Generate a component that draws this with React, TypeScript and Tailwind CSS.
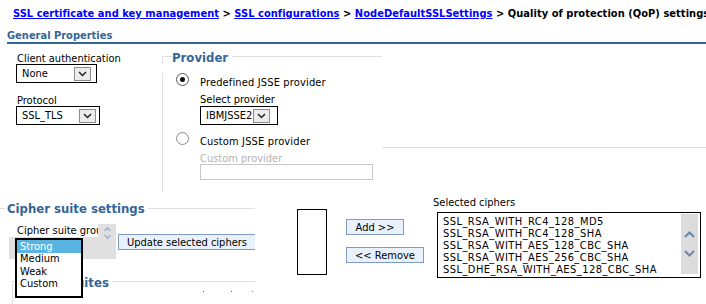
import React from "react";

function Chev() {
  return (
    <svg width="9" height="6" viewBox="0 0 9 6">
      <path d="M1 1L4.5 4.5L8 1" fill="none" stroke="#222" strokeWidth="1.5" />
    </svg>
  );
}

function Sel({ className, text, btn }: { className: string; text: string; btn: string }) {
  return (
    <div className={`flex items-center border border-black h-[19px] pl-[5px] bg-white ${className}`}>
      <span className="leading-[13px] whitespace-nowrap">{text}</span>
      <span className={`flex h-[14px] w-[17px] items-center justify-center border border-[#8c8c8c] bg-[#ececec] ${btn}`}>
        <Chev />
      </span>
    </div>
  );
}

function Radio({ checked }: { checked?: boolean }) {
  return (
    <span
      className={`flex h-[13px] w-[13px] shrink-0 items-center justify-center rounded-full border bg-white ${
        checked ? "border-[#555]" : "border-[#8a8a8a]"
      }`}
    >
      {checked && <span className="h-[5px] w-[5px] rounded-full bg-[#111]" />}
    </span>
  );
}

export default function App() {
  const ciphers = [
    "SSL_RSA_WITH_RC4_128_MD5",
    "SSL_RSA_WITH_RC4_128_SHA",
    "SSL_RSA_WITH_AES_128_CBC_SHA",
    "SSL_RSA_WITH_AES_256_CBC_SHA",
    "SSL_DHE_RSA_WITH_AES_128_CBC_SHA",
  ];
  return (
    <div className="relative h-[304px] w-[706px] overflow-hidden bg-white text-[11px] text-black font-['DejaVu_Sans_Condensed','DejaVu_Sans',sans-serif]">
      {/* Breadcrumb */}
      <div className="h-[20px] whitespace-nowrap pl-[13px] pt-[7px] font-bold leading-[13px] tracking-[0.04px]">
        <a className="text-[#0000ff] underline">SSL certificate and key management</a>
        <span> &gt; </span>
        <a className="text-[#0000ff] underline">SSL configurations</a>
        <span> &gt; </span>
        <a className="text-[#0000ff] underline">NodeDefaultSSLSettings</a>
        <span> &gt; Quality of protection (QoP) settings</span>
      </div>

      {/* General Properties */}
      <div className="ml-[7px] mt-[10px] border-b-2 border-[#336699] font-bold leading-[12px] text-[#336699]">
        General Properties
      </div>

      {/* Row 1 */}
      <div className="flex h-[152px]">
        <div className="w-[162px] shrink-0 pl-[16px] pt-[9px]">
          <div className="pl-[1px] leading-[11px]">Client authentication</div>
          <Sel className="w-[81px]" text="None" btn="ml-[26px]" />
          <div className="mt-[12px] pl-[1px] leading-[11px]">Protocol</div>
          <Sel className="w-[84px]" text="SSL_TLS" btn="ml-[16px]" />
        </div>

        {/* Provider fieldset */}
        <div className="w-[220px] shrink-0 pt-[7px]">
          <div className="flex h-[13px]">
            <div className="mt-[5px] h-[8px] w-[10px] border-l border-t border-[#e0e0e0]" />
            <div className="text-[13px] font-bold leading-[13px] text-[#336699]">Provider</div>
            <div className="ml-[4px] mt-[5px] flex-1 border-t border-[#e0e0e0]" />
          </div>
          <div className="h-[119px] border-l border-[#e0e0e0] pl-[13px]">
            <div className="mt-[9px] flex h-[16px]">
              <Radio checked />
              <span className="ml-[11px] mt-[3px] whitespace-nowrap leading-[13px] tracking-[0.15px]">Predefined JSSE provider</span>
            </div>
            <div className="pl-[24px]">
              <div className="mt-[4px] leading-[13px]">Select provider</div>
              <Sel className="w-[78px]" text="IBMJSSE2" btn="ml-[1px]" />
            </div>
            <div className="mt-[7px] flex h-[16px]">
              <Radio />
              <span className="ml-[11px] mt-[3px] whitespace-nowrap leading-[13px] tracking-[0.15px]">Custom JSSE provider</span>
            </div>
            <div className="pl-[24px]">
              <div className="mt-[5px] leading-[11px] text-[#b4b4b4]">Custom provider</div>
              <div className="h-[16px] w-[173px] border border-[#c8c8c8] bg-white" />
            </div>
          </div>
        </div>

        <div className="flex-1">
          <div className="mt-[103px] border-t border-[#e0e0e0]" />
        </div>
      </div>

      {/* Row 2: cipher suites */}
      <div className="flex h-[108px]">
        <div className="w-[255px] shrink-0 overflow-hidden">
          <div className="mt-[6px] flex h-[13px]">
            <div className="mt-[6px] w-[5px] border-t border-[#e0e0e0]" />
            <div className="ml-[2px] whitespace-nowrap text-[13px] font-bold leading-[13px] text-[#336699]">
              Cipher suite settings
            </div>
            <div className="ml-[3px] mt-[6px] flex-1 border-t border-[#e0e0e0]" />
          </div>
          <div className="flex">
            <div className="ml-[9px] mt-[9px] h-[35px] w-[107px] shrink-0 bg-[#e0e0e0]">
              <div className="flex">
                <div className="h-[13px] w-[89px] overflow-hidden whitespace-nowrap bg-white pl-[8px] leading-[13px]">
                  Cipher suite groups
                </div>
                <svg className="ml-[5px] mt-[2px]" width="9" height="14" viewBox="0 0 9 14">
                  <path d="M1.5 5L4.5 2L7.5 5" fill="none" stroke="#9fb2cc" strokeWidth="1.6" />
                  <path d="M1.5 9L4.5 12L7.5 9" fill="none" stroke="#9fb2cc" strokeWidth="1.6" />
                </svg>
              </div>
            </div>
            <div className="ml-[2px] mt-[19px] flex h-[16px] shrink-0 items-center whitespace-nowrap border border-[#7f9bc3] bg-[#e9f1fc] pl-[8px] pr-[10px] leading-[13px]">
              Update selected ciphers
            </div>
          </div>
          <div className="mt-[17px] flex h-[13px]">
            <div className="ml-[12px] mt-[5px] h-[8px] w-[8px] border-l border-t border-[#e0e0e0]" />
            <div className="ml-[2px] whitespace-nowrap text-[13px] font-bold leading-[13px] text-[#336699]">
              Cipher suites
            </div>
            <div className="ml-[3px] mt-[5px] flex-1 border-t border-[#e0e0e0]" />
          </div>
          <div className="ml-[12px] flex h-[20px] border-l border-[#e0e0e0]">
            <div className="ml-[190px] mt-[2px] h-px w-px bg-[#555]" />
            <div className="ml-[27px] mt-[2px] h-px w-px bg-[#555]" />
            <div className="ml-[20px] mt-[2px] h-px w-px bg-[#888]" />
          </div>
        </div>

        <div className="ml-[42px] mt-[13px] h-[66px] w-[30px] shrink-0 border border-black" />

        <div className="ml-[19px] flex w-[78px] shrink-0 flex-col items-start">
          <div className="mt-[23px] flex h-[16px] w-[58px] items-center justify-center border border-[#7f9bc3] bg-[#e9f1fc] leading-[13px]">
            Add &gt;&gt;
          </div>
          <div className="mt-[12px] flex h-[16px] w-[78px] items-center justify-center border border-[#7f9bc3] bg-[#e9f1fc] leading-[13px]">
            &lt;&lt; Remove
          </div>
        </div>

        <div className="ml-[9px] shrink-0">
          <div className="leading-[13px]">Selected ciphers</div>
          <div className="ml-[4px] mt-[3px] flex h-[66px] w-[264px] border border-black">
            <div className="flex-1 pl-[5px] pt-[3px]">
              {ciphers.map((c) => (
                <div key={c} className="whitespace-nowrap leading-[12px] tracking-[0.45px]">
                  {c}
                </div>
              ))}
            </div>
            <div className="mr-[2px] mt-px flex h-[60px] w-[17px] flex-col items-center justify-center gap-[12px] bg-[#dcdcdc]">
              <svg width="11" height="7" viewBox="0 0 11 7">
                <path d="M1 6L5.5 1.5L10 6" fill="none" stroke="#6b86aa" strokeWidth="2" />
              </svg>
              <svg width="11" height="7" viewBox="0 0 11 7">
                <path d="M1 1L5.5 5.5L10 1" fill="none" stroke="#6b86aa" strokeWidth="2" />
              </svg>
            </div>
          </div>
        </div>
      </div>

      {/* Open dropdown list (overlay) */}
      <div className="absolute left-[15px] top-[238px] h-[60px] w-[68px] border-2 border-black bg-white">
        <div className="h-[13px] bg-[#5ab4e2] pl-[3px] leading-[14px] text-white">Strong</div>
        <div className="pl-[3px] leading-[12.5px]">Medium</div>
        <div className="pl-[3px] leading-[12.5px]">Weak</div>
        <div className="pl-[3px] leading-[12.5px]">Custom</div>
      </div>
    </div>
  );
}
